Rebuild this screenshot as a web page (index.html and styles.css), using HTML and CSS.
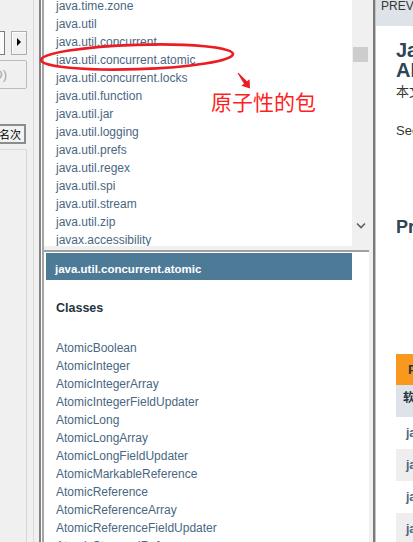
FILE: index.html
```html
<!DOCTYPE html>
<html lang="zh">
<head>
<meta charset="utf-8">
<title>java.util.concurrent.atomic</title>
<link rel="stylesheet" href="styles.css">
</head>
<body>
<div class="app">
  <aside class="tool">
    <div class="tool-inner">
      <div class="tool-row">
        <div class="field"></div>
        <div class="btn-arrow"><span class="tri"></span></div>
      </div>
      <div class="btn-disabled">取消(D)</div>
      <div class="btn-rank">名次</div>
      <div class="tool-panel"></div>
    </div>
  </aside>
  <div class="vsplit-a"><span class="g1"></span><span class="g2"></span><span class="g3"></span><span class="g4"></span><span class="g5"></span></div>
  <main class="nav">
    <div class="pkg-frame">
      <div class="pkg-list">
        <ul>
          <li>java.time.zone</li>
          <li>java.util</li>
          <li>java.util.concurrent</li>
          <li>java.util.concurrent.atomic</li>
          <li>java.util.concurrent.locks</li>
          <li>java.util.function</li>
          <li>java.util.jar</li>
          <li>java.util.logging</li>
          <li>java.util.prefs</li>
          <li>java.util.regex</li>
          <li>java.util.spi</li>
          <li>java.util.stream</li>
          <li>java.util.zip</li>
          <li>javax.accessibility</li>
          <li>javax.activation</li>
        </ul>
      </div>
      <div class="vscroll">
        <div class="thumb"></div>
        <div class="spacer"></div>
        <div class="arrow-btn">
          <svg width="10" height="7" viewBox="0 0 10 7"><path d="M1 1.5 L5 5.5 L9 1.5" fill="none" stroke="#606060" stroke-width="1.6"/></svg>
        </div>
      </div>
    </div>
    <div class="hsplit"></div>
    <div class="cls-frame">
      <div class="cls-bar">java.util.concurrent.atomic</div>
      <h2 class="cls-title">Classes</h2>
      <ul class="cls-list">
        <li>AtomicBoolean</li>
        <li>AtomicInteger</li>
        <li>AtomicIntegerArray</li>
        <li>AtomicIntegerFieldUpdater</li>
        <li>AtomicLong</li>
        <li>AtomicLongArray</li>
        <li>AtomicLongFieldUpdater</li>
        <li>AtomicMarkableReference</li>
        <li>AtomicReference</li>
        <li>AtomicReferenceArray</li>
        <li>AtomicReferenceFieldUpdater</li>
        <li>AtomicStampedReference</li>
        <li>DoubleAccumulator</li>
      </ul>
    </div>
  </main>
  <div class="vsplit-b"><span class="h1"></span><span class="h2"></span><span class="h3"></span></div>
  <section class="doc">
    <div class="doc-inner">
      <div class="subnav">PREV&nbsp;&nbsp;&nbsp;NEXT&nbsp;&nbsp;&nbsp;FRAMES&nbsp;&nbsp;&nbsp;NO FRAMES</div>
      <div class="header">
        <h1 class="title">Java™ Platform, Standard Edition 8<br>API 规范</h1>
        <p class="desc">本文档是 Java™ Platform Standard Edition 8 的 API 规范。</p>
        <p class="see">See: 说明</p>
        <h2 class="profiles">Profiles</h2>
      </div>
      <div class="summary">
        <div class="caption"><span>Packages</span></div>
        <div class="thead">软件包&nbsp;&nbsp;说明</div>
        <div class="row">java.applet</div>
        <div class="row alt">java.awt</div>
        <div class="row">java.awt.color</div>
        <div class="row alt">java.awt.datatransfer</div>
      </div>
    </div>
  </section>
</div>
<svg class="annot" width="413" height="542" viewBox="0 0 413 542">
  <ellipse cx="137" cy="57" rx="96" ry="12.2" transform="rotate(-1.8 137 57)" fill="none" stroke="#ec1c24" stroke-width="2.7"/>
  <polygon points="238.4,72.7 247,81.3 249.6,79.2 250,88.5 241.4,85.8 244,83.7 237.6,73.3" fill="#ec1c24"/>
</svg>
<div class="annot-text">原子性的包</div>
</body>
</html>
```

FILE: styles.css
```css
* { box-sizing: border-box; margin: 0; padding: 0; }
html, body { width: 413px; height: 542px; overflow: hidden; }
body {
  position: relative;
  background: #fff;
  font-family: "Liberation Sans", Arial, "Noto Sans CJK SC", sans-serif;
}
ul { list-style: none; }

.app { display: flex; width: 413px; height: 542px; }

/* left tool pane */
.tool { width: 33px; flex: none; background: #f0f0f0; overflow: hidden; }
.tool-inner {
  width: 73px; height: 100%; margin-left: -40px; padding-top: 31px;
  display: flex; flex-direction: column;
}
.tool-row { display: flex; gap: 6px; height: 24px; margin-right: 6px; flex: none; }
.field { width: 45px; border: 1px solid #7a7a7a; background: #fbfbfb; }
.btn-arrow {
  width: 16px; background: #f0f0f0; border: 1px solid #adadad;
  box-shadow: inset 1px 1px #fff;
  display: flex; align-items: center; justify-content: center;
}
.tri {
  width: 0; height: 0; margin-bottom: 3px;
  border-left: 4px solid #000; border-top: 4px solid transparent; border-bottom: 4px solid transparent;
}
.btn-disabled {
  flex: none; margin: 5px 6px 0 0; height: 29px;
  border: 1px solid #bcbcbc; border-radius: 2px; background: #f0f0f0;
  color: #a3a3a3; font-size: 13px; line-height: 27px;
  text-align: right; padding-right: 19px; white-space: nowrap;
}
.btn-rank {
  flex: none; margin: 35px 7px 0 0; height: 20px;
  border: 2px solid #8c8c8c; background: #f2f2f2;
  font-family: "Noto Sans CJK SC", sans-serif;
  font-size: 11px; line-height: 16px; color: #000;
  text-align: right; padding-right: 3px; white-space: nowrap;
}
.tool-panel {
  flex: 1; margin: 5px 6px 0 0;
  border-top: 1px solid #dadada; border-right: 1px solid #d6d6d6;
}

/* splitters */
.vsplit-a { width: 11px; flex: none; display: flex; }
.g1 { width: 1px; background: #dadada; }
.g2 { width: 5px; background: #f0f0f0; }
.g3 { width: 2px; background: #828282; }
.g4 { width: 1px; background: #fff; }
.g5 { width: 2px; background: #a5a5a5; }

.vsplit-b { width: 7px; flex: none; display: flex; }
.h1 { width: 4px; background: #f0f0f0; }
.h2 { width: 2px; background: #7a7a7a; }
.h3 { width: 1px; background: #c4c4c4; }

/* nav column */
.nav { width: 325px; flex: none; display: flex; flex-direction: column; }
.pkg-frame { height: 246px; flex: none; display: flex; }
.pkg-list {
  width: 308px; overflow: hidden; background: #fff; padding-left: 12px;
  font-size: 12px; line-height: 18px; color: #4a6782; white-space: nowrap;
}
.pkg-list ul { margin-top: -3px; }
.vscroll { width: 17px; background: #f0f0f0; display: flex; flex-direction: column; }
.thumb { height: 15px; margin: 47px 1px 0 1px; background: #cdcdcd; }
.spacer { flex: 1; }
.arrow-btn { height: 17px; margin-bottom: 12px; display: flex; align-items: center; justify-content: center; }

.hsplit { height: 6px; flex: none; background: #f0f0f0; border-bottom: 2px solid #a0a0a0; }

.cls-frame { flex: 1; background: #fff; padding-top: 1px; overflow: hidden; }
.cls-bar {
  height: 27px; margin: 0 17px 0 2px; padding: 5px 0 0 9px;
  background: #4d7a97; color: #fff; font-weight: bold;
  font-size: 11.5px; line-height: 22px; white-space: nowrap; overflow: hidden;
}
.cls-title {
  margin-top: 20px; padding-left: 12px;
  font-size: 12.5px; line-height: 16px; font-weight: bold; color: #253441;
}
.cls-list {
  margin-top: 23px; padding-left: 12px;
  font-size: 12px; line-height: 18px; color: #4a6782; white-space: nowrap;
}

/* doc pane */
.doc { flex: 1; min-width: 0; overflow: hidden; }
.doc-inner { width: 700px; }
.subnav {
  height: 26px; background: #dee3e9; padding-left: 5px;
  font-size: 12px; line-height: 13px; color: #353833; white-space: nowrap;
}
.header { padding-left: 20px; }
.title { margin-top: 14px; font-size: 20px; line-height: 20px; font-weight: bold; color: #2c4557; }
.desc { margin-top: 3px; font-size: 13px; line-height: 18px; color: #353833; }
.see { margin-top: 21px; font-size: 13px; line-height: 18px; color: #353833; }
.profiles { margin-top: 76px; font-size: 18px; line-height: 22px; font-weight: bold; color: #2c4557; }

.summary { margin: 116px 0 0 20px; width: 600px; }
.caption { height: 31px; display: flex; }
.caption span {
  background: #f8981d; padding-left: 12px; width: 120px;
  font-size: 13px; font-weight: bold; line-height: 31px; color: #253441;
}
.thead {
  height: 32px; background: #dee3e9; padding: 6px 0 0 7px;
  font-size: 12px; font-weight: bold; line-height: 15px; color: #253441;
}
.row {
  height: 32px; background: #fff; padding: 9px 0 0 10px;
  font-size: 12px; font-weight: bold; line-height: 15px; color: #4a6782;
}
.row.alt { background: #eeeeef; }

/* annotation overlay */
.annot { position: absolute; left: 0; top: 0; pointer-events: none; }
.annot-text {
  position: absolute; left: 211px; top: 91px;
  font-family: "Noto Sans CJK SC", sans-serif; font-size: 21px; line-height: 1;
  color: #ff1f1f; white-space: nowrap;
}
```
